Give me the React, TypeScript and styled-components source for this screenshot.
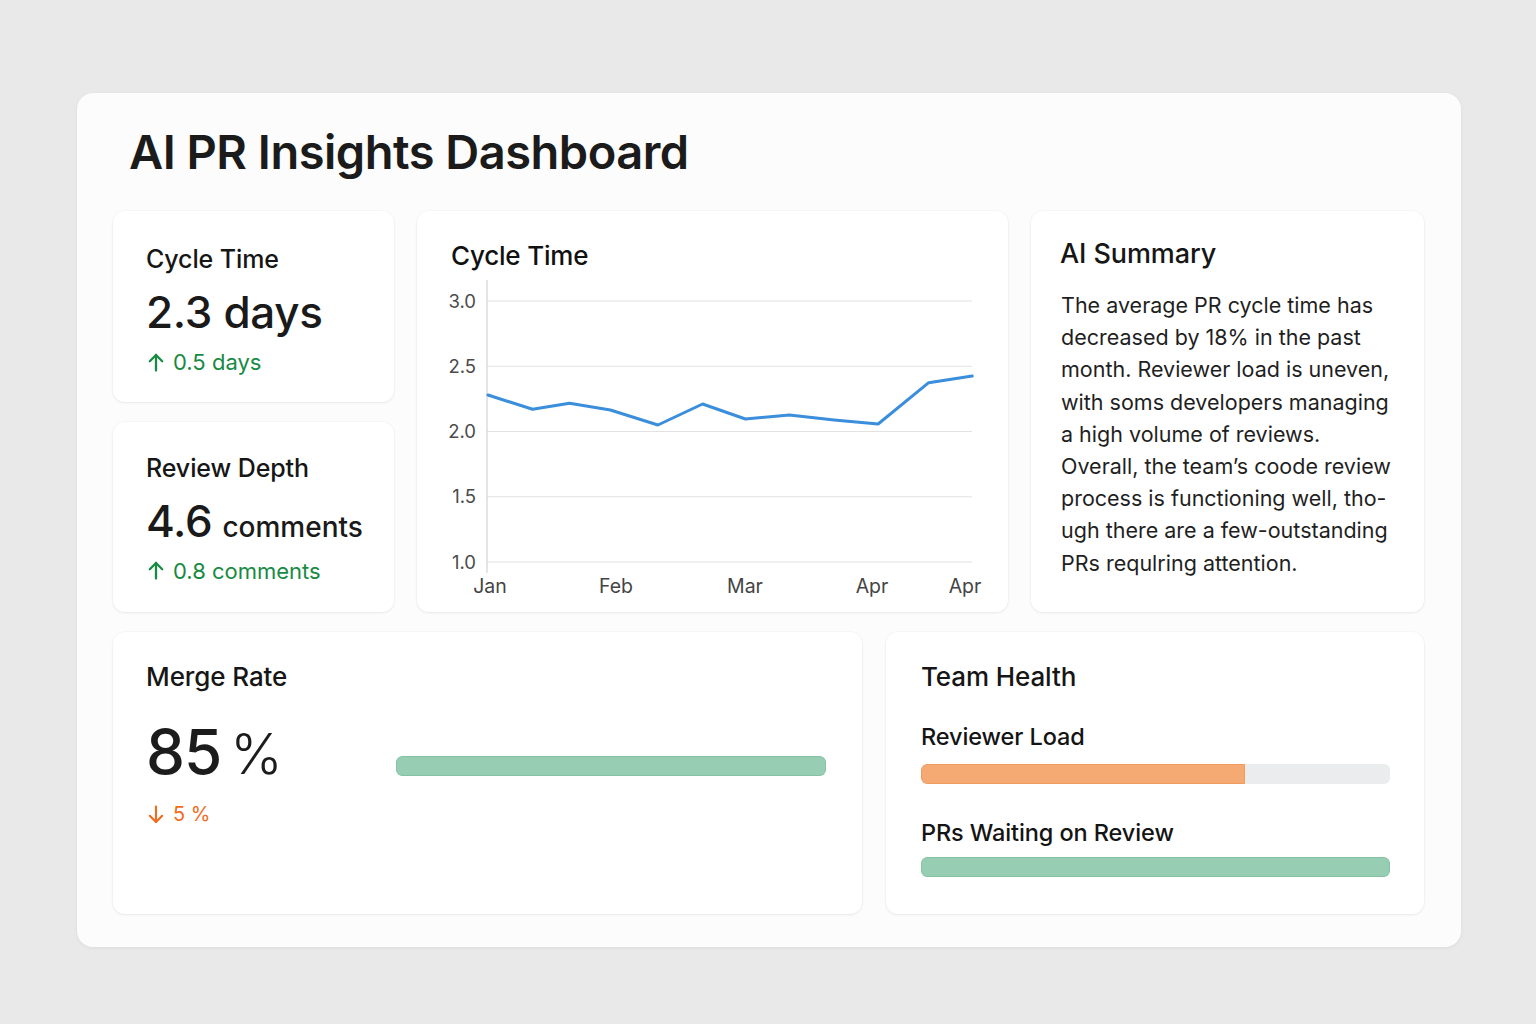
import React from "react";
import styled, { createGlobalStyle } from "styled-components";

const Global = createGlobalStyle`
  html, body { margin: 0; padding: 0; }
  body {
    background: #e9e9e9;
    font-family: Inter, "Noto Sans", "Liberation Sans", sans-serif;
    color: #1a1a1a;
  }
  * { box-sizing: border-box; }
`;

const Page = styled.div`
  padding: 93px 0 0 77px;
  min-height: 1024px;
`;

const Panel = styled.div`
  width: 1384px;
  height: 854px;
  padding: 29px 37px 33px 36px;
  background: #fcfcfc;
  border-radius: 16px;
  box-shadow: 0 1px 4px rgba(0, 0, 0, 0.06);
`;

const Title = styled.h1`
  margin: 0 0 29px;
  padding-left: 16px;
  font-size: 47px;
  line-height: 60px;
  font-weight: 600;
  letter-spacing: -0.5px;
  color: #1b1b1b;
`;

const TopGrid = styled.div`
  display: grid;
  grid-template-columns: 281px 591px 1fr;
  column-gap: 23px;
  height: 401px;
`;

const Stack = styled.div`
  display: grid;
  grid-template-rows: 1fr 1fr;
  row-gap: 20px;
`;

const BottomGrid = styled.div`
  display: grid;
  grid-template-columns: 749px 1fr;
  column-gap: 24px;
  height: 282px;
  margin-top: 20px;
`;

const Card = styled.section<{ $pad?: string }>`
  background: #ffffff;
  border-radius: 12px;
  box-shadow: 0 1px 3px rgba(0, 0, 0, 0.07), 0 0 0 1px rgba(0, 0, 0, 0.015);
  padding: ${(p) => p.$pad || "0"};
  display: flex;
  flex-direction: column;
  align-items: stretch;
`;

const Label = styled.h2<{ $size?: number }>`
  margin: 0;
  font-size: ${(p) => p.$size || 25}px;
  line-height: 32px;
  font-weight: 450;
  color: #161616;
  letter-spacing: -0.1px;
`;

const Value = styled.div`
  margin-top: 12px;
  font-size: 44px;
  line-height: 50px;
  height: 50px;
  font-weight: 500;
  color: #1a1a1a;
  letter-spacing: -0.3px;
  white-space: nowrap;
`;

const Unit = styled.span`
  font-size: 28px;
  line-height: 1;
  font-weight: 450;
  margin-left: 10px;
  letter-spacing: 0;
`;

const Delta = styled.div<{ $color: string; $size?: number }>`
  margin-top: 11px;
  display: flex;
  align-items: center;
  gap: 9px;
  color: ${(p) => p.$color};
  font-size: ${(p) => p.$size || 22}px;
  line-height: 28px;
  font-weight: 400;
  svg { flex: none; margin-left: 2px; }
`;

const ChartTitle = styled.h2`
  margin: 0;
  padding-left: 34px;
  font-size: 26px;
  line-height: 32px;
  font-weight: 500;
  color: #111;
  letter-spacing: -0.2px;
`;

const Summary = styled.p`
  margin: 19px 0 0;
  padding-left: 1px;
  font-size: 21.5px;
  line-height: 32.2px;
  color: #1f1f1f;
  font-weight: 400;
`;

const MergeRow = styled.div`
  display: flex;
  align-items: flex-start;
  margin-top: 24px;
`;

const MergeLeft = styled.div`
  width: 250px;
  flex: none;
  display: flex;
  flex-direction: column;
`;

const BigValue = styled.div`
  font-size: 62px;
  line-height: 70px;
  font-weight: 500;
  color: #1c1c1c;
  letter-spacing: -1px;
`;

const Percent = styled.span`
  font-size: 56px;
  font-weight: 300;
  margin-left: 9px;
  letter-spacing: 0;
`;

const Bar = styled.div<{ $mt?: number }>`
  flex: 1;
  height: 20px;
  margin-top: ${(p) => p.$mt || 0}px;
  border-radius: 6px;
  background: #ebeced;
  overflow: hidden;
  display: flex;
`;

const Fill = styled.div<{ $color: string; $border: string; $full?: boolean }>`
  height: 100%;
  background: ${(p) => p.$color};
  border: 1px solid ${(p) => p.$border};
  border-radius: ${(p) => (p.$full ? "6px" : "6px 0 0 6px")};
`;

const SubLabel = styled.div<{ $mt: number }>`
  margin-top: ${(p) => p.$mt}px;
  font-size: 23.5px;
  line-height: 30px;
  font-weight: 450;
  color: #141414;
  letter-spacing: -0.1px;
`;

const MeterBar = styled(Bar)`
  flex: none;
  width: 100%;
`;

const Arrow = ({ down, w = 2.3 }: { down?: boolean; w?: number }) => (
  <svg width={16} height={19} viewBox="0 0 16 19" fill="none" stroke="currentColor" strokeWidth={w} strokeLinecap="round" strokeLinejoin="round">
    {down ? (
      <>
        <path d="M8 1.5V17" />
        <path d="M1.8 10.8L8 17l6.2-6.2" />
      </>
    ) : (
      <>
        <path d="M8 2V17.5" />
        <path d="M1.8 8.2L8 2l6.2 6.2" />
      </>
    )}
  </svg>
);

const points: [number, number][] = [
  [488, 395],
  [532.6, 409.3],
  [569.5, 403.3],
  [610.4, 410],
  [657.9, 425],
  [702.6, 404],
  [745.4, 419],
  [789.4, 415],
  [834.1, 420],
  [878.1, 424],
  [928.7, 382.7],
  [972.2, 376],
];

const ChartSvg = () => {
  const ox = 417;
  const oy = 272;
  const yTicks = [3.0, 2.5, 2.0, 1.5, 1.0];
  const yFor = (v: number) => 301 + (3 - v) * 130.5 - oy;
  const xLabels: [string, number][] = [
    ["Jan", 490],
    ["Feb", 616],
    ["Mar", 745],
    ["Apr", 872],
    ["Apr", 965],
  ];
  const d = points
    .map(([x, y], i) => `${i === 0 ? "M" : "L"}${(x - ox).toFixed(1)} ${(y - oy).toFixed(1)}`)
    .join(" ");
  return (
    <svg width={591} height={340} viewBox="0 0 591 340" style={{ display: "block" }}>
      {yTicks.map((v) => (
        <g key={v}>
          <line x1={70} x2={555} y1={yFor(v)} y2={yFor(v)} stroke="#e2e2e2" strokeWidth={1.2} />
          <text
            x={59}
            y={yFor(v) + 6.5}
            textAnchor="end"
            fontSize={18.5}
            fill="#4b4b4b"
            fontFamily="Inter, sans-serif"
          >
            {v.toFixed(1)}
          </text>
        </g>
      ))}
      <line x1={70} x2={70} y1={8} y2={301} stroke="#d4d4d4" strokeWidth={1.2} />
      <path d={d} fill="none" stroke="#3b8edb" strokeWidth={3} strokeLinejoin="round" strokeLinecap="round" />
      {xLabels.map(([t, x], i) => (
        <text
          key={i}
          x={x - ox}
          y={320.5}
          textAnchor="middle"
          fontSize={19.5}
          fill="#444"
          fontFamily="Inter, sans-serif"
        >
          {t}
        </text>
      ))}
    </svg>
  );
};

export default function App() {
  return (
    <Page>
      <Global />
      <Panel>
        <Title>AI PR Insights Dashboard</Title>
        <TopGrid>
          <Stack>
            <Card $pad="32px 20px 0 33px">
              <Label>Cycle Time</Label>
              <Value>2.3 days</Value>
              <Delta $color="#178a43">
                <Arrow />
                0.5 days
              </Delta>
            </Card>
            <Card $pad="30px 20px 0 33px">
              <Label>Review Depth</Label>
              <Value>
                4.6<Unit>comments</Unit>
              </Value>
              <Delta $color="#178a43">
                <Arrow />
                0.8 comments
              </Delta>
            </Card>
          </Stack>
          <Card $pad="29px 0 0">
            <ChartTitle>Cycle Time</ChartTitle>
            <ChartSvg />
          </Card>
          <Card $pad="27px 20px 0 29px">
            <Label $size={27}>AI Summary</Label>
            <Summary>
              The average PR cycle time has
              <br />
              decreased by 18% in the past
              <br />
              month. Reviewer load is uneven,
              <br />
              with soms developers managing
              <br />
              a high volume of reviews.
              <br />
              Overall, the team’s coode review
              <br />
              process is functioning well, tho-
              <br />
              ugh there are a few-outstanding
              <br />
              PRs requlring attention.
            </Summary>
          </Card>
        </TopGrid>
        <BottomGrid>
          <Card $pad="29px 36px 0 33px">
            <Label $size={26}>Merge Rate</Label>
            <MergeRow>
              <MergeLeft>
                <BigValue>
                  85<Percent>%</Percent>
                </BigValue>
                <Delta $color="#f26b1d" $size={20}>
                  <Arrow down w={2.1} />
                  5 %
                </Delta>
              </MergeLeft>
              <Bar $mt={39}>
                <Fill $color="#97cdb2" $border="#84c2a2" $full style={{ width: "100%" }} />
              </Bar>
            </MergeRow>
          </Card>
          <Card $pad="29px 34px 0 35px">
            <Label $size={26}>Team Health</Label>
            <SubLabel $mt={29}>Reviewer Load</SubLabel>
            <MeterBar $mt={12}>
              <Fill $color="#f4aa72" $border="#f19b5c" style={{ width: "69%" }} />
            </MeterBar>
            <SubLabel $mt={34}>PRs Waiting on Review</SubLabel>
            <MeterBar $mt={9}>
              <Fill $color="#97cdb2" $border="#84c2a2" $full style={{ width: "100%" }} />
            </MeterBar>
          </Card>
        </BottomGrid>
      </Panel>
    </Page>
  );
}
